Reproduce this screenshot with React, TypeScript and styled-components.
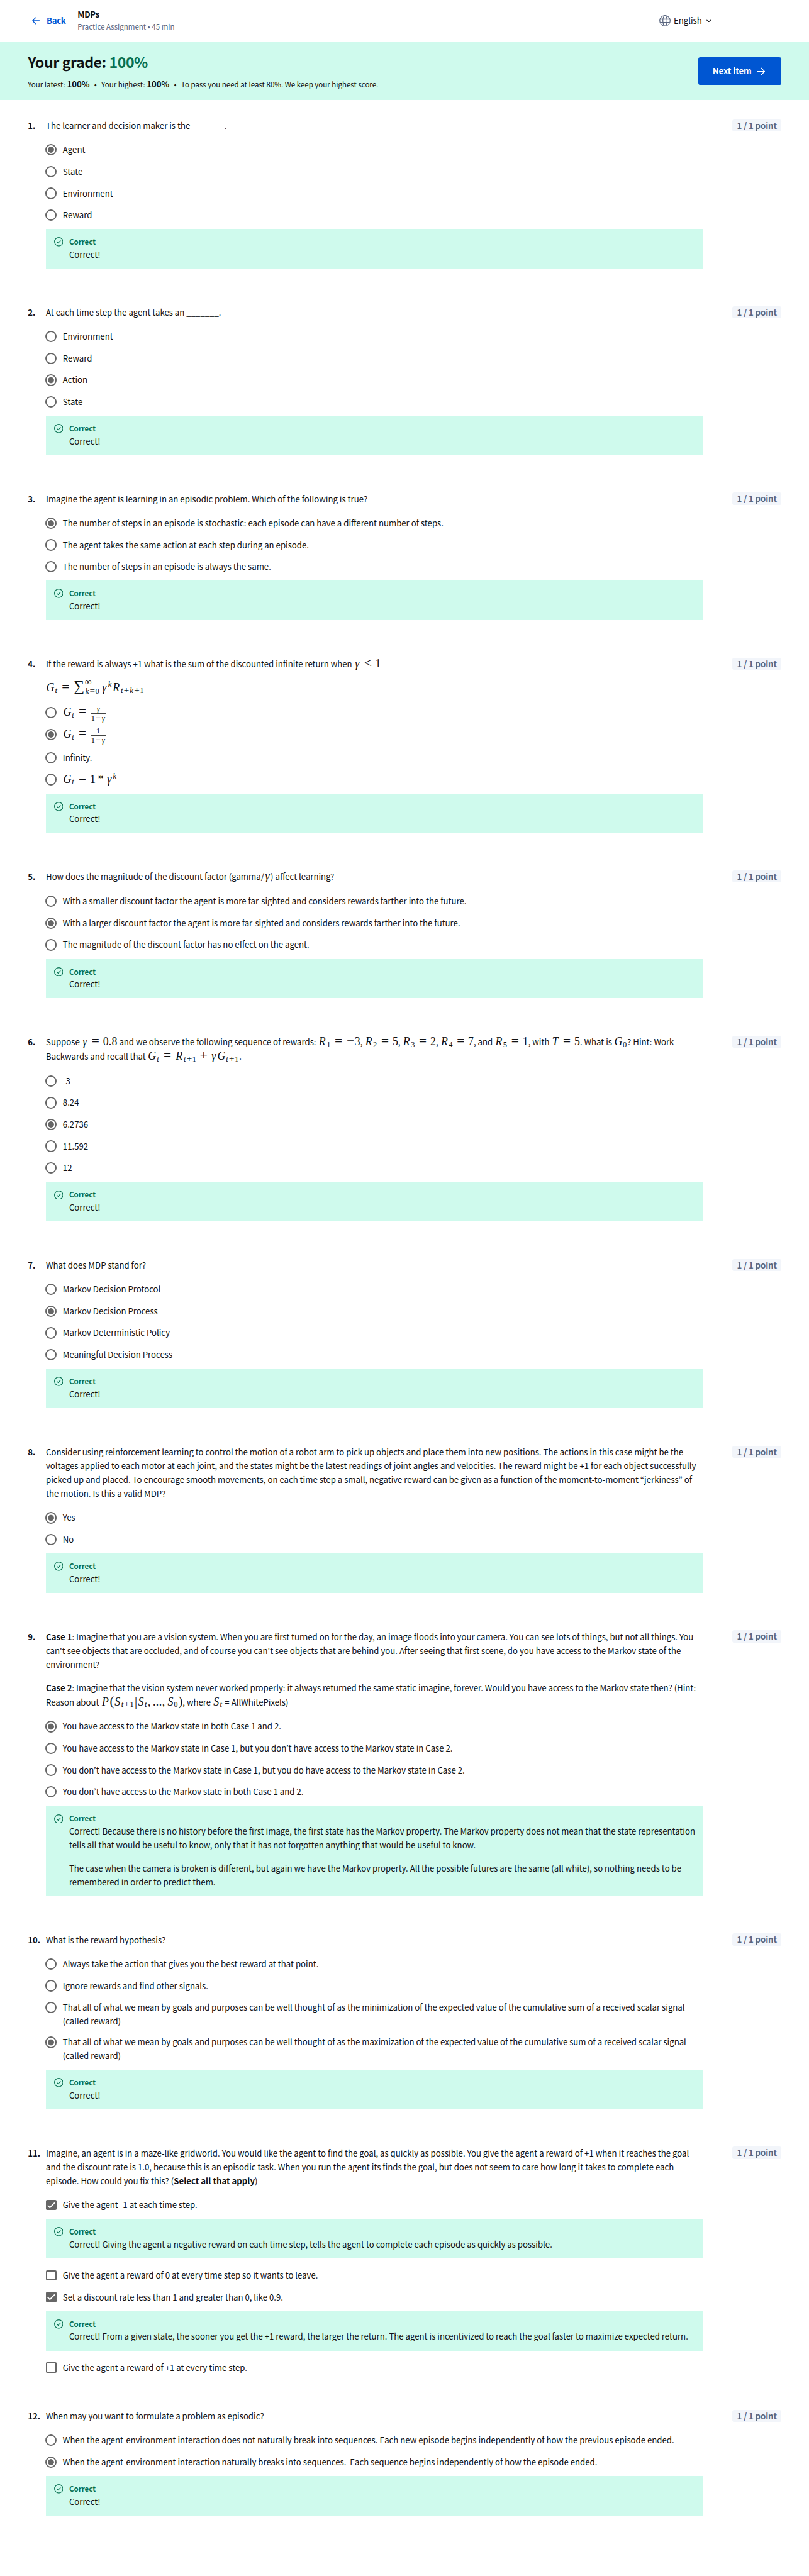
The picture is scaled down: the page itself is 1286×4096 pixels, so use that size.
import React from "react";
import styled, { createGlobalStyle, css } from "styled-components";

/* Design units are physical pixels of a 1919px wide page. */
const u = (n: number) => `${+(n * 0.67014).toFixed(3)}px`;

const color = {
  ink: "#0f1114",
  mint: "#cffaed",
  green: "#087051",
  blue: "#0056d2",
  slate: "#5b6780",
  chip: "#f2f5fa",
  control: "#666666",
};

const Global = createGlobalStyle`
  html, body { margin: 0; padding: 0; background: #fff; }
  body {
    font-family: "Noto Sans CJK KR", "Source Sans Pro", "Noto Sans", sans-serif;
    font-size: ${u(19.7)};
    line-height: ${u(33)};
    color: ${color.ink};
  }
  p { margin: 0; }
`;

const Page = styled.div`
  width: ${u(1919)};
  height: 4096px;
  overflow: hidden;
  background: #fff;
`;

const Header = styled.header`
  display: flex;
  align-items: center;
  box-sizing: border-box;
  height: ${u(100)};
  padding: 0 ${u(232)} 0 ${u(76)};
  border-bottom: 1px solid #b3c6c3;
`;

const BackLink = styled.a`
  display: flex;
  align-items: center;
  gap: ${u(16.5)};
  width: ${u(108)};
  color: ${color.blue};
  font-weight: 700;
  letter-spacing: -0.025em;
`;

const Heading = styled.div`
  display: flex;
  flex-direction: column;
  flex: 1;
  padding-bottom: ${u(2.8)};
`;

const ItemName = styled.div`
  font-weight: 700;
  letter-spacing: -0.03em;
  line-height: ${u(29)};
`;

const ItemMeta = styled.div`
  font-size: ${u(17.2)};
  line-height: ${u(27)};
  color: ${color.slate};
`;

const Language = styled.div`
  display: flex;
  align-items: center;
  svg:first-child { margin-right: ${u(7.5)}; }
  svg:last-child { margin-left: ${u(11)}; }
`;

const Banner = styled.section`
  display: flex;
  align-items: center;
  justify-content: space-between;
  box-sizing: border-box;
  height: ${u(138)};
  padding: 0 ${u(65)} 0 ${u(66)};
  background: ${color.mint};
`;

const Grade = styled.h1`
  margin: 0;
  font-size: ${u(34.5)};
  line-height: ${u(48)};
  font-weight: 700;
  letter-spacing: -0.0187em;
  span { color: ${color.green}; }
`;

const Summary = styled.p`
  display: flex;
  gap: ${u(11)};
  margin-top: ${u(15)};
  font-size: ${u(17.2)};
  line-height: ${u(30)};
  b { font-size: ${u(19.7)}; }
`;

const NextButton = styled.button`
  display: flex;
  align-items: center;
  justify-content: center;
  gap: ${u(12)};
  width: ${u(197)};
  height: ${u(66)};
  padding: 0 ${u(6)} 0 0;
  border: 0;
  border-radius: ${u(5)};
  background: ${color.blue};
  color: #fff;
  font: inherit;
  font-weight: 700;
  letter-spacing: -0.005em;
`;

const Questions = styled.main`
  display: flex;
  flex-direction: column;
  gap: ${u(73)};
  padding: ${u(44.3)} ${u(65)} 0 ${u(66)};
`;

const QuestionRow = styled.section`
  display: grid;
  grid-template-columns: ${u(43)} ${u(1558)} 1fr;
  align-items: start;
`;

const Num = styled.div`
  font-weight: 700;
`;

const Points = styled.div`
  justify-self: end;
  box-sizing: border-box;
  width: ${u(117)};
  height: ${u(29)};
  margin-top: ${u(1)};
  border-radius: ${u(5)};
  background: ${color.chip};
  color: ${color.slate};
  text-align: center;
  font-weight: 700;
  letter-spacing: -0.008em;
  line-height: ${u(28.4)};
`;

const Prompt = styled.div<{ $lastLine: number }>`
  display: flex;
  flex-direction: column;
  gap: ${u(22)};
  margin-bottom: ${u(14.6)};
  p:last-child { line-height: ${(p) => u(p.$lastLine)}; }
`;

const OptionRow = styled.label<{ $lines: number; $height?: number }>`
  display: flex;
  align-items: flex-start;
  box-sizing: border-box;
  min-height: ${(p) => u(p.$height ?? 51.7)};
  padding: ${(p) => u(p.$lines > 1 ? 8.6 : 9.3)} 0 ${(p) => (p.$lines > 1 ? u(8.4) : 0)};
`;

const ControlCell = styled.span`
  display: flex;
  align-items: center;
  flex: none;
  width: ${u(40)};
  height: ${u(33)};
`;

const RadioRing = styled.span<{ $on?: boolean }>`
  box-sizing: border-box;
  width: ${u(27.4)};
  height: ${u(27.4)};
  margin-left: ${u(-1.4)};
  border: 2px solid ${color.control};
  border-radius: 50%;
  ${(p) =>
    p.$on &&
    css`
      background: radial-gradient(circle, ${color.control} ${u(6.6)}, transparent ${u(7.8)});
    `}
`;

const CheckSquare = styled.span<{ $on?: boolean }>`
  display: flex;
  box-sizing: border-box;
  width: ${u(25)};
  height: ${u(25)};
  border: 2px solid ${color.control};
  border-radius: ${u(3)};
  background: ${(p) => (p.$on ? color.control : "#fff")};
`;

const OptionText = styled.span`
  flex: 1;
`;

const Feedback = styled.div`
  display: grid;
  grid-template-columns: ${u(36)} 1fr;
  box-sizing: border-box;
  min-height: ${u(93.7)};
  margin: ${u(7.3)} 0 ${u(14.6)};
  padding: ${u(16.2)} ${u(12)} ${u(16.3)} ${u(19)};
  background: ${color.mint};
`;

const FeedbackIcon = styled.span`
  display: flex;
  padding-top: ${u(3.2)};
`;

const FeedbackTitle = styled.div`
  font-weight: 700;
  font-size: ${u(17.2)};
  line-height: ${u(27)};
  color: ${color.green};
`;

const FeedbackBody = styled.div`
  display: flex;
  flex-direction: column;
  gap: ${u(22)};
  margin-top: ${u(0.8)};
`;

/* ---------- math ---------- */

const M = styled.span`
  font-family: "Liberation Serif", "Times New Roman", serif;
  font-size: ${u(26.6)};
  line-height: 0;
  white-space: nowrap;
`;

const Glyph = styled.span<{ $w: number; $scale?: number; $it?: boolean }>`
  display: inline-block;
  width: ${(p) => p.$w / (p.$scale ?? 1)}em;
  font-size: ${(p) => p.$scale ?? 1}em;
  font-style: ${(p) => (p.$it ? "italic" : "normal")};
  text-align: center;
  line-height: 0;
`;

const Sub = styled.span`
  font-size: 0.7em;
  vertical-align: -0.22em;
  margin-right: 0.07em;
  line-height: 0;
`;

const Sup = styled.span`
  font-size: 0.7em;
  vertical-align: 0.56em;
  line-height: 0;
`;

const Limits = styled.span`
  display: inline-flex;
  flex-direction: column;
  vertical-align: 0.786em;
  font-size: 0.7em;
  line-height: 1.14;
  margin: -0.5em 0.24em -0.8em 0;
`;

const Frac = styled.span`
  display: inline-flex;
  flex-direction: column;
  vertical-align: 0.563em;
  font-size: 0.7em;
  line-height: 1;
  margin: -0.5em 0 -0.5em 0.06em;
`;

const FracTop = styled.span`
  padding-bottom: 0.04em;
  border-bottom: 1px solid #444;
  text-align: center;
`;

const FracBottom = styled.span`
  padding: 0.06em 0.08em 0;
`;

const widths: Record<string, number> = {
  G: 0.786, R: 0.767, S: 0.613, P: 0.78, T: 0.72, "γ": 0.574, t: 0.361, k: 0.55,
};
const operators = "=+<−*";

/* Sets each symbol in its math-font advance; operators get side bearings unless tight. */
const Sym = ({ s, tight }: { s: string; tight?: boolean }) => (
  <>
    {[...s].map((c, i) => {
      if (c in widths) return <Glyph key={i} $w={widths[c]} $it>{c}</Glyph>;
      if (operators.includes(c)) {
        const pad = tight ? 0 : c === "+" || c === "*" ? 0.444 : 0.556;
        const w = c === "*" ? 0.5 : 0.778;
        return <Glyph key={i} $w={w + pad} $scale={c === "*" ? 1 : 1.2}>{c}</Glyph>;
      }
      if (c === "-") return <Glyph key={i} $w={0.778} $scale={1.2}>−</Glyph>;
      if (c === "," || c === ".") return <Glyph key={i} $w={0.278}>{c}</Glyph>;
      if (c === "(" || c === ")") return <Glyph key={i} $w={0.389} $scale={1.15}>{c}</Glyph>;
      if (c === "|") return <Glyph key={i} $w={0.278} $scale={1.15}>{c}</Glyph>;
      if (c === " ") return <Glyph key={i} $w={0.167} />;
      return <Glyph key={i} $w={0.5}>{c}</Glyph>;
    })}
  </>
);

const Idx = ({ v, s }: { v: string; s: string }) => (
  <>
    <Sym s={v} />
    <Sub><Sym s={s} tight /></Sub>
  </>
);

const Fraction = ({ top }: { top: string }) => (
  <M>
    <Idx v="G" s="t" /><Sym s="=" />
    <Frac>
      <FracTop><Sym s={top} tight /></FracTop>
      <FracBottom><Sym s="1−γ" tight /></FracBottom>
    </Frac>
  </M>
);

/* ---------- icons ---------- */

const px = (n: number) => n * 0.67014;

const ArrowIcon = ({ back }: { back?: boolean }) => (
  <svg width={px(back ? 18 : 20)} height={px(back ? 18 : 20)} viewBox="0 0 20 20" fill="none" stroke="currentColor" strokeWidth={back ? 2.3 : 2} strokeLinecap="round" strokeLinejoin="round">
    {back ? <path d="M19 10H1.5M9 2L1.5 10L9 18" /> : <path d="M1 10H18.5M10 1.5L18.5 10L10 18.5" />}
  </svg>
);

const GlobeIcon = () => (
  <svg width={px(27)} height={px(27)} viewBox="0 0 27 27" fill="none" stroke={color.slate} strokeWidth="1.9">
    <circle cx="13.5" cy="13.5" r="12.4" />
    <ellipse cx="13.5" cy="13.5" rx="5" ry="12.4" />
    <path d="M2 9.7H25M2 17.3H25" />
  </svg>
);

const ChevronIcon = () => (
  <svg width={px(11)} height={px(7.4)} viewBox="0 0 12 8" fill="none" stroke={color.ink} strokeWidth="1.9" strokeLinecap="round" strokeLinejoin="round">
    <path d="M1.2 1.8L6 6L10.8 1.8" />
  </svg>
);

const CorrectIcon = () => (
  <svg width={px(22)} height={px(22)} viewBox="0 0 22 22" fill="none" stroke={color.green} strokeWidth="1.9">
    <circle cx="11" cy="11" r="10" />
    <path d="M6.6 11.3L9.8 14L15.4 8" />
  </svg>
);

const Tick = () => (
  <svg width="100%" height="100%" viewBox="0 0 20 20" fill="none" stroke="#fff" strokeWidth="2.8">
    <path d="M1.2 10.6L6.8 16L18.8 3.8" />
  </svg>
);

/* ---------- content ---------- */

type Option = {
  text: React.ReactNode;
  on?: boolean;
  lines?: number;
  height?: number;
  note?: React.ReactNode[];
};
type Question = {
  prompt: React.ReactNode[];
  lastLine?: number;
  options: Option[];
  multi?: boolean;
  feedback?: React.ReactNode[];
};

const ok = ["Correct!"];

const questions: Question[] = [
  {
    prompt: ["The learner and decision maker is the _______."],
    options: [{ text: "Agent", on: true }, { text: "State" }, { text: "Environment" }, { text: "Reward" }],
    feedback: ok,
  },
  {
    prompt: ["At each time step the agent takes an _______."],
    options: [{ text: "Environment" }, { text: "Reward" }, { text: "Action", on: true }, { text: "State" }],
    feedback: ok,
  },
  {
    prompt: ["Imagine the agent is learning in an episodic problem. Which of the following is true?"],
    options: [
      { text: "The number of steps in an episode is stochastic: each episode can have a different number of steps.", on: true },
      { text: "The agent takes the same action at each step during an episode." },
      { text: "The number of steps in an episode is always the same." },
    ],
    feedback: ok,
  },
  {
    lastLine: 36,
    prompt: [
      <>If the reward is always +1 what is the sum of the discounted infinite return when <M><Sym s="γ<1" /></M></>,
      <M>
        <Idx v="G" s="t" /><Sym s="=" />
        <Glyph $w={1.056} $scale={1.35}>∑</Glyph>
        <Limits>
          <span><Glyph $w={0.8} $scale={1.2}>∞</Glyph></span>
          <span><Sym s="k=0" tight /></span>
        </Limits>
        <Sym s="γ" /><Sup><Sym s="k" /></Sup><Idx v="R" s="t+k+1" />
      </M>,
    ],
    options: [
      { text: <Fraction top="γ" />, height: 52.5 },
      { text: <Fraction top="1" />, on: true, height: 55.4 },
      { text: "Infinity.", height: 51.2 },
      { text: <M><Idx v="G" s="t" /><Sym s="=1*γ" /><Sup><Sym s="k" /></Sup></M> },
    ],
    feedback: ok,
  },
  {
    lastLine: 34,
    prompt: [<>How does the magnitude of the discount factor (gamma/<M><Sym s="γ" /></M>) affect learning?</>],
    options: [
      { text: "With a smaller discount factor the agent is more far-sighted and considers rewards farther into the future." },
      { text: "With a larger discount factor the agent is more far-sighted and considers rewards farther into the future.", on: true },
      { text: "The magnitude of the discount factor has no effect on the agent." },
    ],
    feedback: ok,
  },
  {
    lastLine: 34,
    prompt: [
      <>
        Suppose <M><Sym s="γ=0.8" /></M> and we observe the following sequence of rewards:{" "}
        <M><Idx v="R" s="1" /><Sym s="=-3" /></M>, <M><Idx v="R" s="2" /><Sym s="=5" /></M>,{" "}
        <M><Idx v="R" s="3" /><Sym s="=2" /></M>, <M><Idx v="R" s="4" /><Sym s="=7" /></M>, and{" "}
        <M><Idx v="R" s="5" /><Sym s="=1" /></M>, with <M><Sym s="T=5" /></M>. What is{" "}
        <M><Idx v="G" s="0" /></M>? Hint: Work<br />Backwards and recall that{" "}
        <M><Idx v="G" s="t" /><Sym s="=" /><Idx v="R" s="t+1" /><Sym s="+γ" /><Idx v="G" s="t+1" /></M>.
      </>,
    ],
    options: [{ text: "-3" }, { text: "8.24" }, { text: "6.2736", on: true }, { text: "11.592" }, { text: "12" }],
    feedback: ok,
  },
  {
    prompt: ["What does MDP stand for?"],
    options: [
      { text: "Markov Decision Protocol" },
      { text: "Markov Decision Process", on: true },
      { text: "Markov Deterministic Policy" },
      { text: "Meaningful Decision Process" },
    ],
    feedback: ok,
  },
  {
    prompt: [
      "Consider using reinforcement learning to control the motion of a robot arm to pick up objects and place them into new positions. The actions in this case might be the voltages applied to each motor at each joint, and the states might be the latest readings of joint angles and velocities. The reward might be +1 for each object successfully picked up and placed. To encourage smooth movements, on each time step a small, negative reward can be given as a function of the moment-to-moment “jerkiness” of the motion. Is this a valid MDP?",
    ],
    options: [{ text: "Yes", on: true }, { text: "No" }],
    feedback: ok,
  },
  {
    lastLine: 34,
    prompt: [
      <><b>Case 1</b>: Imagine that you are a vision system. When you are first turned on for the day, an image floods into your camera. You can see lots of things, but not all things. You can't see objects that are occluded, and of course you can't see objects that are behind you. After seeing that first scene, do you have access to the Markov state of the environment?</>,
      <>
        <b>Case 2</b>: Imagine that the vision system never worked properly: it always returned the same static imagine, forever. Would you have access to the Markov state then? (Hint:<br />Reason about{" "}
        <M><Sym s="P(" /><Idx v="S" s="t+1" /><Sym s="|" /><Idx v="S" s="t" /><Sym s=", ..., " /><Idx v="S" s="0" /><Sym s=")" /></M>, where{" "}
        <M><Idx v="S" s="t" /></M> = AllWhitePixels)
      </>,
    ],
    options: [
      { text: "You have access to the Markov state in both Case 1 and 2.", on: true },
      { text: "You have access to the Markov state in Case 1, but you don’t have access to the Markov state in Case 2." },
      { text: "You don’t have access to the Markov state in Case 1, but you do have access to the Markov state in Case 2." },
      { text: "You don’t have access to the Markov state in both Case 1 and 2." },
    ],
    feedback: [
      "Correct! Because there is no history before the first image, the first state has the Markov property. The Markov property does not mean that the state representation tells all that would be useful to know, only that it has not forgotten anything that would be useful to know.",
      "The case when the camera is broken is different, but again we have the Markov property. All the possible futures are the same (all white), so nothing needs to be remembered in order to predict them.",
    ],
  },
  {
    prompt: ["What is the reward hypothesis?"],
    options: [
      { text: "Always take the action that gives you the best reward at that point." },
      { text: "Ignore rewards and find other signals." },
      { text: "That all of what we mean by goals and purposes can be well thought of as the minimization of the expected value of the cumulative sum of a received scalar signal (called reward)", lines: 2 },
      { text: "That all of what we mean by goals and purposes can be well thought of as the maximization of the expected value of the cumulative sum of a received scalar signal (called reward)", lines: 2, on: true },
    ],
    feedback: ok,
  },
  {
    multi: true,
    prompt: [
      <>Imagine, an agent is in a maze-like gridworld. You would like the agent to find the goal, as quickly as possible. You give the agent a reward of +1 when it reaches the goal and the discount rate is 1.0, because this is an episodic task. When you run the agent its finds the goal, but does not seem to care how long it takes to complete each episode. How could you fix this? (<b>Select all that apply</b>)</>,
    ],
    options: [
      { text: "Give the agent -1 at each time step.", on: true, note: ["Correct! Giving the agent a negative reward on each time step, tells the agent to complete each episode as quickly as possible."] },
      { text: "Give the agent a reward of 0 at every time step so it wants to leave." },
      { text: "Set a discount rate less than 1 and greater than 0, like 0.9.", on: true, note: ["Correct! From a given state, the sooner you get the +1 reward, the larger the return. The agent is incentivized to reach the goal faster to maximize expected return."] },
      { text: "Give the agent a reward of +1 at every time step." },
    ],
  },
  {
    prompt: ["When may you want to formulate a problem as episodic?"],
    options: [
      { text: "When the agent-environment interaction does not naturally break into sequences. Each new episode begins independently of how the previous episode ended." },
      { text: "When the agent-environment interaction naturally breaks into sequences.\u00a0 Each sequence begins independently of how the episode ended.", on: true },
    ],
    feedback: ok,
  },
];

const FeedbackPanel = ({ body }: { body: React.ReactNode[] }) => (
  <Feedback>
    <FeedbackIcon><CorrectIcon /></FeedbackIcon>
    <div>
      <FeedbackTitle>Correct</FeedbackTitle>
      <FeedbackBody>{body.map((b, i) => <p key={i}>{b}</p>)}</FeedbackBody>
    </div>
  </Feedback>
);

const QuestionBlock = ({ q, n }: { q: Question; n: number }) => (
  <QuestionRow>
    <Num>{n}.</Num>
    <div>
      <Prompt $lastLine={q.lastLine ?? 33}>{q.prompt.map((p, i) => <p key={i}>{p}</p>)}</Prompt>
      {q.options.map((o, i) => (
        <React.Fragment key={i}>
          <OptionRow $lines={o.lines ?? 1} $height={o.height}>
            <ControlCell>
              {q.multi ? <CheckSquare $on={o.on}>{o.on && <Tick />}</CheckSquare> : <RadioRing $on={o.on} />}
            </ControlCell>
            <OptionText>{o.text}</OptionText>
          </OptionRow>
          {o.note && <FeedbackPanel body={o.note} />}
        </React.Fragment>
      ))}
      {q.feedback && <FeedbackPanel body={q.feedback} />}
    </div>
    <Points>1 / 1 point</Points>
  </QuestionRow>
);

export default function App() {
  return (
    <Page>
      <Global />
      <Header>
        <BackLink><ArrowIcon back />Back</BackLink>
        <Heading>
          <ItemName>MDPs</ItemName>
          <ItemMeta>Practice Assignment • 45 min</ItemMeta>
        </Heading>
        <Language><GlobeIcon />English<ChevronIcon /></Language>
      </Header>
      <Banner>
        <div>
          <Grade>Your grade: <span>100%</span></Grade>
          <Summary>
            <span>Your latest: <b>100%</b></span>
            <span>•</span>
            <span>Your highest: <b>100%</b></span>
            <span>•</span>
            <span>To pass you need at least 80%. We keep your highest score.</span>
          </Summary>
        </div>
        <NextButton>Next item<ArrowIcon /></NextButton>
      </Banner>
      <Questions>
        {questions.map((q, i) => <QuestionBlock key={i} q={q} n={i + 1} />)}
      </Questions>
    </Page>
  );
}
